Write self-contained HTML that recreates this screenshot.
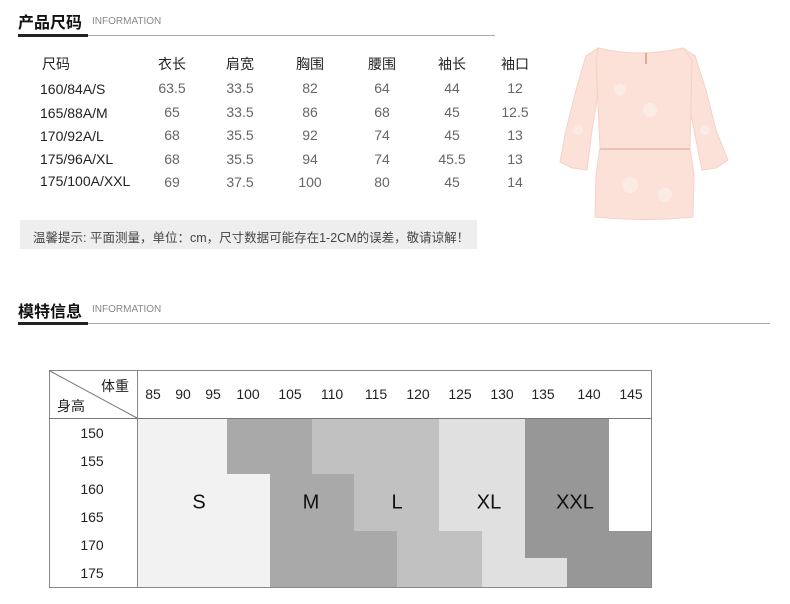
<!DOCTYPE html>
<html><head><meta charset="utf-8">
<style>
*{margin:0;padding:0;box-sizing:border-box}
body{width:790px;height:604px;background:#fff;position:relative;overflow:hidden;font-family:"Liberation Sans","Noto Sans CJK SC",sans-serif;color:#222}
.a{position:absolute;white-space:nowrap}
.t{font-size:16px;font-weight:bold;color:#111}
.i{font-size:10px;color:#888;letter-spacing:0}
.r{position:absolute}
.c{position:absolute;transform:translateX(-50%);white-space:nowrap}
.h{font-size:14px;color:#222}
.n{font-size:14px;color:#666}
.s{font-size:14px;color:#222}
.w{font-size:14px;color:#222}
.lbl{font-size:20px;color:#111;transform:translate(-50%,-50%)}
</style></head><body>
<div class="a t" style="left:18px;top:9px">产品尺码</div>
<div class="a i" style="left:92px;top:16px">INFORMATION</div>
<div class="r" style="left:18px;top:34px;width:70px;height:3px;background:#222"></div>
<div class="r" style="left:88px;top:35px;width:407px;height:1px;background:#aaa"></div>

<div class="a h" style="left:42px;top:54px">尺码</div>
<div class="c h" style="left:172px;top:54px">衣长</div>
<div class="c h" style="left:240px;top:54px">肩宽</div>
<div class="c h" style="left:310px;top:54px">胸围</div>
<div class="c h" style="left:382px;top:54px">腰围</div>
<div class="c h" style="left:452px;top:54px">袖长</div>
<div class="c h" style="left:515px;top:54px">袖口</div>

<div class="a s" style="left:40px;top:81px">160/84A/S</div>
<div class="a s" style="left:40px;top:105px">165/88A/M</div>
<div class="a s" style="left:40px;top:128px">170/92A/L</div>
<div class="a s" style="left:40px;top:151px">175/96A/XL</div>
<div class="a s" style="left:40px;top:173px">175/100A/XXL</div>

<div class="c n" style="left:172px;top:80px">63.5</div><div class="c n" style="left:240px;top:80px">33.5</div><div class="c n" style="left:310px;top:80px">82</div><div class="c n" style="left:382px;top:80px">64</div><div class="c n" style="left:452px;top:80px">44</div><div class="c n" style="left:515px;top:80px">12</div>
<div class="c n" style="left:172px;top:104px">65</div><div class="c n" style="left:240px;top:104px">33.5</div><div class="c n" style="left:310px;top:104px">86</div><div class="c n" style="left:382px;top:104px">68</div><div class="c n" style="left:452px;top:104px">45</div><div class="c n" style="left:515px;top:104px">12.5</div>
<div class="c n" style="left:172px;top:127px">68</div><div class="c n" style="left:240px;top:127px">35.5</div><div class="c n" style="left:310px;top:127px">92</div><div class="c n" style="left:382px;top:127px">74</div><div class="c n" style="left:452px;top:127px">45</div><div class="c n" style="left:515px;top:127px">13</div>
<div class="c n" style="left:172px;top:151px">68</div><div class="c n" style="left:240px;top:151px">35.5</div><div class="c n" style="left:310px;top:151px">94</div><div class="c n" style="left:382px;top:151px">74</div><div class="c n" style="left:452px;top:151px">45.5</div><div class="c n" style="left:515px;top:151px">13</div>
<div class="c n" style="left:172px;top:174px">69</div><div class="c n" style="left:240px;top:174px">37.5</div><div class="c n" style="left:310px;top:174px">100</div><div class="c n" style="left:382px;top:174px">80</div><div class="c n" style="left:452px;top:174px">45</div><div class="c n" style="left:515px;top:174px">14</div>

<div class="r" style="left:20px;top:220px;width:457px;height:29px;background:#eeeeee"></div>
<div class="a" style="left:33px;top:227px;font-size:12.5px;color:#444">温馨提示: 平面测量，单位：cm，尺寸数据可能存在1-2CM的误差，敬请谅解！</div>

<svg class="r" style="left:0;top:0" width="790" height="604">
<g fill="#fbe1d8" stroke="#f5d2c6" stroke-width="1">
<path d="M598 48 L586 56 L576 90 L566 130 L560 162 L572 168 L587 170 L592 130 L597 100 Z"/>
<path d="M683 48 L695 56 L706 90 L716 130 L728 160 L716 168 L702 170 L694 130 L688 100 Z"/>
<path d="M598 48 Q640 58 683 48 L692 60 L690 148 L694 175 L693 217 Q644 222 595 217 L596 175 L600 148 L596 60 Z"/>
</g>
<path d="M600 149 L690 149" stroke="#e8b8a8" stroke-width="1.5"/>
<path d="M646 53 L646 64" stroke="#e6a894" stroke-width="2"/>
<g fill="#fff" opacity="0.35">
<circle cx="620" cy="90" r="6"/><circle cx="650" cy="110" r="7"/><circle cx="630" cy="185" r="8"/><circle cx="665" cy="195" r="7"/><circle cx="705" cy="130" r="5"/><circle cx="578" cy="130" r="5"/>
</g>

<g shape-rendering="crispEdges">
<rect x="137" y="418" width="90" height="170" fill="#f2f2f2"/>
<rect x="227" y="474" width="43" height="114" fill="#f2f2f2"/>
<rect x="227" y="418" width="85" height="56" fill="#a9a9a9"/>
<rect x="270" y="474" width="84" height="57" fill="#a9a9a9"/>
<rect x="270" y="531" width="127" height="57" fill="#a9a9a9"/>
<rect x="312" y="418" width="127" height="56" fill="#c1c1c1"/>
<rect x="354" y="474" width="85" height="57" fill="#c1c1c1"/>
<rect x="397" y="531" width="85" height="57" fill="#c1c1c1"/>
<rect x="439" y="418" width="86" height="113" fill="#e0e0e0"/>
<rect x="482" y="531" width="43" height="27" fill="#e0e0e0"/>
<rect x="482" y="558" width="85" height="30" fill="#e0e0e0"/>
<rect x="525" y="418" width="84" height="113" fill="#979797"/>
<rect x="525" y="531" width="127" height="27" fill="#979797"/>
<rect x="567" y="558" width="85" height="30" fill="#979797"/>
<rect x="49.5" y="370.5" width="602" height="217" fill="none" stroke="#888"/>
<line x1="137.5" y1="370" x2="137.5" y2="588" stroke="#888"/>
<line x1="49" y1="418.5" x2="652" y2="418.5" stroke="#777"/>
</g>
<line x1="50" y1="371" x2="137" y2="418" stroke="#777"/>
</svg>

<div class="a t" style="left:18px;top:298px">模特信息</div>
<div class="a i" style="left:92px;top:304px">INFORMATION</div>
<div class="r" style="left:18px;top:322px;width:70px;height:3px;background:#222"></div>
<div class="r" style="left:88px;top:323px;width:682px;height:1px;background:#aaa"></div>

<div class="a w" style="left:101px;top:376px">体重</div>
<div class="a w" style="left:57px;top:396px">身高</div>
<div class="c w" style="left:153px;top:386px">85</div>
<div class="c w" style="left:183px;top:386px">90</div>
<div class="c w" style="left:213px;top:386px">95</div>
<div class="c w" style="left:248px;top:386px">100</div>
<div class="c w" style="left:290px;top:386px">105</div>
<div class="c w" style="left:332px;top:386px">110</div>
<div class="c w" style="left:376px;top:386px">115</div>
<div class="c w" style="left:418px;top:386px">120</div>
<div class="c w" style="left:460px;top:386px">125</div>
<div class="c w" style="left:502px;top:386px">130</div>
<div class="c w" style="left:543px;top:386px">135</div>
<div class="c w" style="left:589px;top:386px">140</div>
<div class="c w" style="left:631px;top:386px">145</div>

<div class="c w" style="left:92px;top:425px">150</div>
<div class="c w" style="left:92px;top:453px">155</div>
<div class="c w" style="left:92px;top:481px">160</div>
<div class="c w" style="left:92px;top:509px">165</div>
<div class="c w" style="left:92px;top:537px">170</div>
<div class="c w" style="left:92px;top:565px">175</div>

<div class="a lbl" style="left:199px;top:503px">S</div>
<div class="a lbl" style="left:311px;top:503px">M</div>
<div class="a lbl" style="left:397px;top:503px">L</div>
<div class="a lbl" style="left:489px;top:503px">XL</div>
<div class="a lbl" style="left:575px;top:503px">XXL</div>
</body></html>
